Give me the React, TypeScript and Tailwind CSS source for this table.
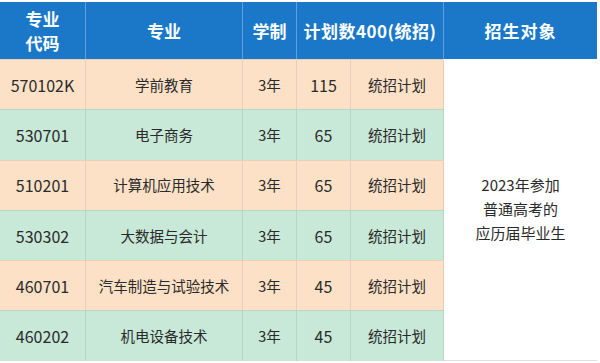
import React from "react";

const rows = [
  { code: "570102K", name: "学前教育", years: "3年", count: "115", plan: "统招计划", tone: "peach" },
  { code: "530701", name: "电子商务", years: "3年", count: "65", plan: "统招计划", tone: "green" },
  { code: "510201", name: "计算机应用技术", years: "3年", count: "65", plan: "统招计划", tone: "peach" },
  { code: "530302", name: "大数据与会计", years: "3年", count: "65", plan: "统招计划", tone: "green" },
  { code: "460701", name: "汽车制造与试验技术", years: "3年", count: "45", plan: "统招计划", tone: "peach" },
  { code: "460202", name: "机电设备技术", years: "3年", count: "45", plan: "统招计划", tone: "green" },
];

const headCell =
  "flex items-center justify-center bg-[#1b78c9] text-white font-bold text-[17px] border-r border-[#5f9fdc] text-center";

export default function App() {
  return (
    <div
      className="w-[600px] h-[363px] bg-white pt-[2px]"
      style={{ fontFamily: '"Noto Sans CJK SC", "Noto Sans", sans-serif' }}
    >
      <div className="w-[597px] grid grid-cols-[86px_157px_54px_54px_93px_153px] grid-rows-[57px_repeat(6,50.3px)] border-r border-[#d8d8d8]">
        <div className={`${headCell} leading-[24px]`}>
          <span>
            专业
            <br />
            代码
          </span>
        </div>
        <div className={headCell}>专业</div>
        <div className={headCell}>学制</div>
        <div className={`${headCell} col-span-2 tracking-[0.5px]`}>计划数400(统招)</div>
        <div className={`${headCell} border-r-0 tracking-[1px]`}>招生对象</div>

        {rows.map((r, i) => {
          const bg = r.tone === "peach" ? "bg-[#fde1c6]" : "bg-[#c8e8d8]";
          const base = `${bg} flex items-center justify-center text-[#2a2a2a] border-r border-t border-[#00000014]`;
          const num = `${base} text-[16px]`;
          const txt = `${base} text-[14.5px]`;
          return (
            <React.Fragment key={r.code}>
              <div className={num} style={{ gridRow: i + 2 }}>{r.code}</div>
              <div className={txt} style={{ gridRow: i + 2 }}>{r.name}</div>
              <div className={txt} style={{ gridRow: i + 2 }}>{r.years}</div>
              <div className={num} style={{ gridRow: i + 2 }}>{r.count}</div>
              <div className={txt} style={{ gridRow: i + 2 }}>{r.plan}</div>
            </React.Fragment>
          );
        })}

        <div className="col-start-6 row-start-2 row-span-6 bg-white flex flex-col items-center justify-center text-[15px] leading-[24px] text-[#2a2a2a] border-b border-[#e0e0e0]">
          <span>2023年参加</span>
          <span>普通高考的</span>
          <span>应历届毕业生</span>
        </div>
      </div>
    </div>
  );
}
